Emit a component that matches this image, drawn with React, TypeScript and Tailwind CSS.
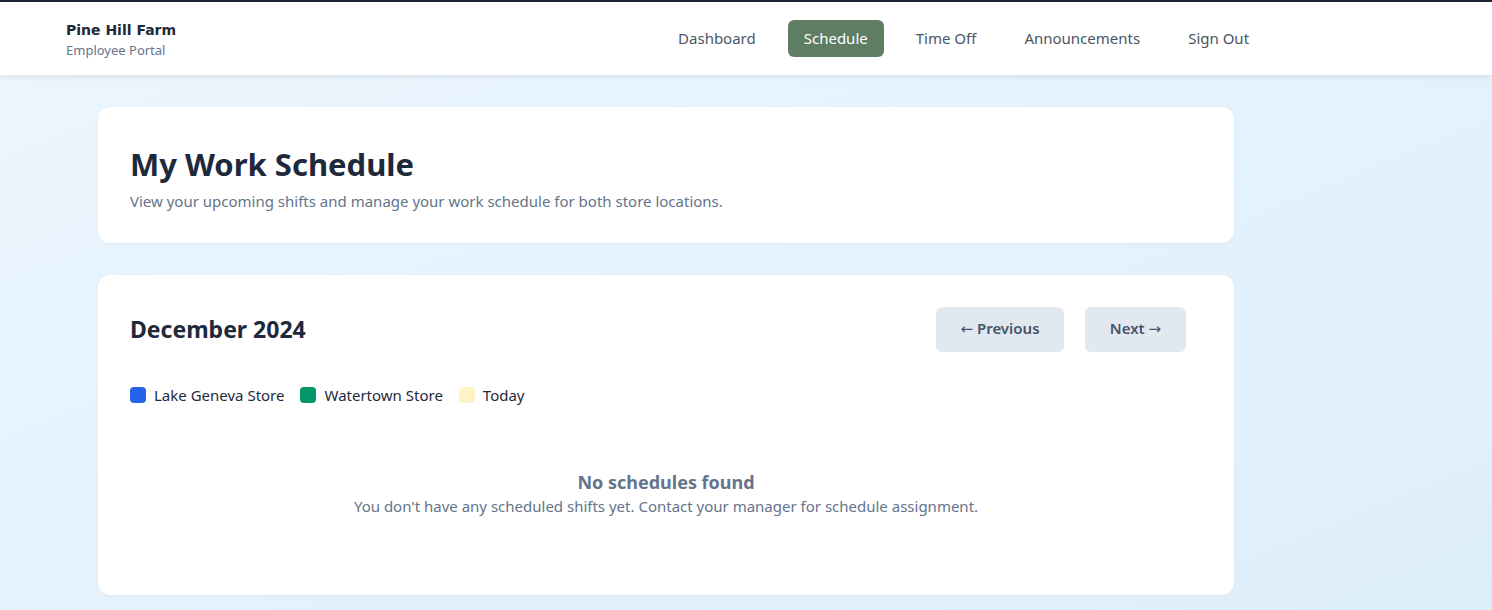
import React from "react";

const navItems = ["Dashboard", "Schedule", "Time Off", "Announcements", "Sign Out"];

const legend = [
  { label: "Lake Geneva Store", color: "bg-[#2563eb]" },
  { label: "Watertown Store", color: "bg-[#059669]" },
  { label: "Today", color: "bg-[#fef3c7]" },
];

const arrowFont = { fontFamily: "'DejaVu Sans', sans-serif" };

export default function App() {
  return (
    <div
      className="min-h-[610px] bg-gradient-to-br from-[#ecf6fe] to-[#ddeefb] border-t-2 border-[#1e2533]"
      style={{ fontFamily: "'Segoe UI', 'Noto Sans', sans-serif" }}
    >
      {/* Top bar */}
      <header className="h-[73px] bg-white shadow-[0_2px_6px_rgba(0,0,0,0.08)] flex items-center pl-[66px]">
        <div className="flex flex-col pt-[3px]">
          <span
            className="text-[14px] font-bold text-[#1e293b] leading-5"
            style={{ fontFamily: "'Comic Sans MS', 'DejaVu Sans', sans-serif" }}
          >
            Pine Hill Farm
          </span>
          <span className="text-[13px] text-[#64748b] leading-5">Employee Portal</span>
        </div>
        <nav className="ml-[486px] flex items-center gap-4">
          {navItems.map((item) => (
            <a
              key={item}
              className={`px-4 h-[37px] flex items-center rounded-md text-[15px] ${
                item === "Schedule" ? "bg-[#5e7d62] text-white" : "text-[#4b5563]"
              }`}
            >
              {item}
            </a>
          ))}
        </nav>
      </header>

      <main className="ml-[98px] w-[1136px] pt-8 pb-4 flex flex-col gap-8">
        {/* Page intro */}
        <section className="bg-white rounded-xl shadow-[0_1px_3px_rgba(0,0,0,0.05)] px-8 pt-[37px] pb-[30px]">
          <h1 className="text-[31px] font-bold text-[#1e293b] leading-[40px]">My Work Schedule</h1>
          <p className="text-[15px] text-[#64748b] mt-[6px]">
            View your upcoming shifts and manage your work schedule for both store locations.
          </p>
        </section>

        {/* Calendar */}
        <section className="bg-white rounded-xl shadow-[0_1px_3px_rgba(0,0,0,0.05)] pl-8 pr-12 pt-8 pb-[77px]">
          <div className="flex items-center justify-between">
            <h2 className="text-[23px] font-bold text-[#1e293b]">December 2024</h2>
            <div className="flex gap-[21px]">
              <button className="w-[128px] h-[45px] rounded-md bg-[#e2e8f0] text-[#475569] text-[15px] font-semibold">
                <span style={arrowFont} className="font-normal">←</span> Previous
              </button>
              <button className="w-[101px] h-[45px] rounded-md bg-[#e2e8f0] text-[#475569] text-[15px] font-semibold">
                Next <span style={arrowFont} className="font-normal">→</span>
              </button>
            </div>
          </div>

          <div className="flex items-center gap-4 mt-[32px]">
            {legend.map((l) => (
              <div key={l.label} className="flex items-center gap-2">
                <span className={`w-4 h-4 rounded-[4px] ${l.color}`} />
                <span className="text-[15px] text-[#1e293b]">{l.label}</span>
              </div>
            ))}
          </div>

          <div className="mt-[64px] text-center pl-4">
            <h3 className="text-[18px] font-bold text-[#64748b] leading-6">No schedules found</h3>
            <p className="text-[15px] text-[#64748b] leading-6">
              You don't have any scheduled shifts yet. Contact your manager for schedule assignment.
            </p>
          </div>
        </section>
      </main>
    </div>
  );
}
